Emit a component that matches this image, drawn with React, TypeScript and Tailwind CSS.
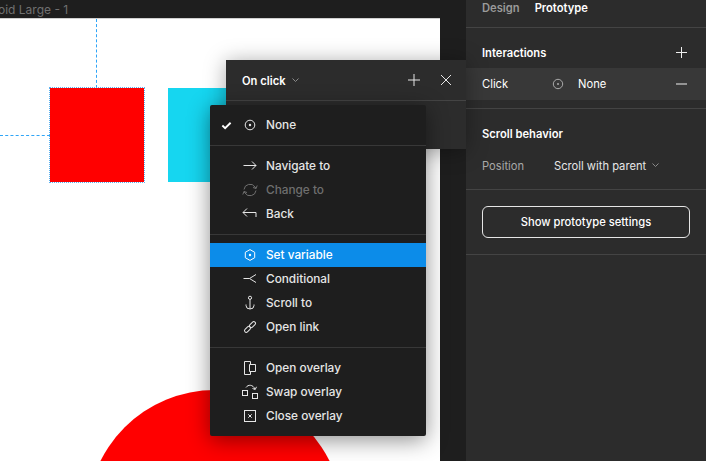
import React from "react";

const font = "font-['Inter','Liberation_Sans',sans-serif]";

function Icon({ children, dim }: { children: React.ReactNode; dim?: boolean }) {
  return (
    <svg
      width="16"
      height="16"
      viewBox="0 0 16 16"
      fill="none"
      stroke="currentColor"
      strokeWidth="1"
      className={dim ? "text-[#6f6f6f]" : "text-[#e6e6e6]"}
    >
      {children}
    </svg>
  );
}

function TargetIcon({ hex }: { hex?: boolean }) {
  return (
    <>
      {hex ? <path d="M8 2.6 12.7 5.3V10.7L8 13.4 3.3 10.7V5.3Z" /> : <circle cx="8" cy="8" r="4.8" />}
      <circle cx="8" cy="8" r="1.2" fill="currentColor" stroke="none" />
    </>
  );
}

type Item = { label: string; icon: React.ReactNode; dim?: boolean; active?: boolean; check?: boolean };

const sections: Item[][] = [
  [{ label: "None", check: true, icon: <TargetIcon /> }],
  [
    { label: "Navigate to", icon: <path d="M1.5 7.5H14M10 3.5l4 4-4 4" /> },
    {
      label: "Change to",
      dim: true,
      icon: (
        <>
          <path d="M2 7.5A6 6 0 0 1 13 5L14 6.5M15.2 3.5 14 6.5 11 5.5" />
          <path d="M14 8.5A6 6 0 0 1 3 11L2 9.5M0.8 12.5 2 9.5 5 10.5" />
        </>
      ),
    },
    { label: "Back", icon: <path d="M14 11V6.5H1M5 2.5l-4 4 4 4" /> },
  ],
  [
    { label: "Set variable", active: true, icon: <TargetIcon hex /> },
    { label: "Conditional", icon: <path d="M1.5 7.5H7.5L14 3.5M7.5 7.5 14 11.5" /> },
    {
      label: "Scroll to",
      icon: (
        <>
          <circle cx="8" cy="2.8" r="1.6" />
          <path d="M8 4.4V14M4 9.5V10.5a4 3.5 0 0 0 8 0V9.5" />
        </>
      ),
    },
    {
      label: "Open link",
      icon: (
        <>
          <rect x="7" y="3.9" width="7" height="3.4" rx="1.7" transform="rotate(-45 10.5 5.6)" />
          <rect x="2" y="8.7" width="7" height="3.4" rx="1.7" transform="rotate(-45 5.5 10.4)" />
        </>
      ),
    },
  ],
  [
    {
      label: "Open overlay",
      icon: (
        <>
          <path d="M8.5 4.5V1.5H2.5V14.5H8.5V11.5" />
          <path d="M7.5 4.5H13.5V11.5H7.5Z" />
        </>
      ),
    },
    {
      label: "Swap overlay",
      icon: (
        <>
          <rect x="0.5" y="6.5" width="5" height="5" />
          <rect x="10.5" y="9.5" width="5" height="5" />
          <path d="M4 3.5C6 0.3 11 0.3 13 5.2M14.5 2.8 13.2 5.5 10.5 4.5" />
        </>
      ),
    },
    {
      label: "Close overlay",
      icon: (
        <>
          <rect x="2.5" y="2.5" width="11" height="11" />
          <path d="M6.3 6.3 9.7 9.7M9.7 6.3 6.3 9.7" />
        </>
      ),
    },
  ],
];

function Menu() {
  return (
    <div className="absolute left-[210px] top-[105px] w-[216px] rounded-[2px] bg-[#1e1e1e] shadow-[0_4px_22px_rgba(0,0,0,0.45)]">
      {sections.map((items, i) => (
        <div key={i} className={i > 0 ? "border-t border-[#383838] py-2" : "py-2"}>
          {items.map((it) => (
            <div key={it.label} className={`flex h-6 items-center ${it.active ? "bg-[#0c8ce9]" : ""}`}>
              <span className="flex w-[24px] justify-end text-white">
                {it.check && (
                  <svg width="11" height="11" viewBox="0 0 12 12" className="mr-[2px]" fill="none" stroke="currentColor" strokeWidth="2">
                    <path d="M1.5 6 4.5 9 10.5 3" />
                  </svg>
                )}
              </span>
              <span className="flex w-[32px] justify-center">
                {it.active ? (
                  <span className="flex [&_svg]:text-white">
                    <Icon>{it.icon}</Icon>
                  </span>
                ) : (
                  <Icon dim={it.dim}>{it.icon}</Icon>
                )}
              </span>
              <span
                className={`pt-[2px] text-[11.8px] font-medium ${
                  it.dim ? "text-[#6f6f6f]" : it.active ? "text-white" : "text-[#e6e6e6]"
                }`}
              >
                {it.label}
              </span>
            </div>
          ))}
        </div>
      ))}
    </div>
  );
}

function Chevron() {
  return (
    <svg width="7" height="4" viewBox="0 0 7 4" fill="none" stroke="#8a8a8a" strokeWidth="1">
      <path d="M.5 .5 3.5 3.5 6.5 .5" />
    </svg>
  );
}

function Popover() {
  return (
    <div className="absolute left-[226px] top-[60px] h-[89px] w-[240px] bg-[#2c2c2c] shadow-[0_2px_20px_rgba(0,0,0,0.35)]">
      <div className="flex h-[41px] items-center justify-between border-b border-[#444] pl-4 pr-[12px]">
        <div className="flex items-center gap-[6px]">
          <span className="pt-[2px] text-[11.2px] font-semibold text-white">On click</span>
          <Chevron />
        </div>
        <div className="flex items-center gap-[16px] text-[#e6e6e6]">
          <svg width="16" height="16" viewBox="0 0 16 16" fill="none" stroke="currentColor">
            <path d="M8 2V14M2 8H14" />
          </svg>
          <svg width="16" height="16" viewBox="0 0 16 16" fill="none" stroke="currentColor">
            <path d="M3 3 13 13M13 3 3 13" />
          </svg>
        </div>
      </div>
    </div>
  );
}

function Canvas() {
  return (
    <div className="flex w-[466px] shrink-0 flex-col bg-[#1e1e1e]">
      <div className="h-[18px] shrink-0 overflow-hidden">
        <div className="ml-[-15px] text-[12px] leading-[20px] text-[#707070]">Droid Large - 1</div>
      </div>
      <div className="relative h-[443px] w-[440px] overflow-hidden border-t border-[#d0d0d0] bg-white">
        <div className="absolute left-[96px] top-0 h-[69px] border-l border-dashed border-[#2fa5f7]" />
        <div className="absolute left-0 top-[116px] w-[50px] border-t border-dashed border-[#2fa5f7]" />
        <div className="absolute left-[50px] top-[69px] h-[94px] w-[94px] bg-[#ff0000] outline outline-1 outline-dotted outline-[#5cb2f0]" />
        <div className="absolute left-[168px] top-[69px] h-[94px] w-[94px] bg-[#16d6f0]" />
        <div className="absolute left-[87px] top-[371px] h-[256px] w-[256px] rounded-full bg-[#ff0000]" />
      </div>
    </div>
  );
}

function Sidebar() {
  return (
    <div className="flex w-[240px] shrink-0 flex-col bg-[#2c2c2c] text-[11.2px]">
      <div className="flex h-[28px] items-start gap-[15px] border-b border-[#444] pl-4 font-semibold leading-[17px]">
        <span className="text-[#9a9a9a]">Design</span>
        <span className="text-white">Prototype</span>
      </div>
      <div className="h-[81px] border-b border-[#444]">
        <div className="flex h-[40px] items-center justify-between pl-4 pr-[19px] pt-[8px]">
          <span className="pt-[2px] font-semibold text-white">Interactions</span>
          <svg width="11" height="11" viewBox="0 0 11 11" fill="none" stroke="#f0f0f0">
            <path d="M5.5 0V11M0 5.5H11" />
          </svg>
        </div>
        <div className="flex h-[32px] items-center bg-[#383838] pl-4 pr-[19px] text-white">
          <span className="w-[70px]">Click</span>
          <span className="flex w-[26px] text-[#aaa]">
            <svg width="12" height="12" viewBox="0 0 12 12" fill="none" stroke="currentColor">
              <circle cx="6" cy="6" r="4.7" />
              <circle cx="6" cy="6" r="1" fill="currentColor" stroke="none" />
            </svg>
          </span>
          <span>None</span>
          <svg className="ml-auto" width="11" height="2" viewBox="0 0 11 2" stroke="#f0f0f0">
            <path d="M0 1H11" />
          </svg>
        </div>
      </div>
      <div className="h-[81px] border-b border-[#444] pl-4">
        <div className="flex h-[48px] items-center pt-[3px] font-semibold text-white">Scroll behavior</div>
        <div className="flex h-[16px] items-center">
          <span className="w-[72px] pt-[2px] text-[#a8a8a8]">Position</span>
          <span className="pt-[2px] text-[#e6e6e6]">Scroll with parent</span>
          <span className="ml-[6px] flex">
            <Chevron />
          </span>
        </div>
      </div>
      <div className="border-b border-[#444] px-4 py-4">
        <div className="flex h-[32px] items-center justify-center rounded-[6px] border border-[#e6e6e6] font-medium text-white">
          Show prototype settings
        </div>
      </div>
    </div>
  );
}

export default function App() {
  return (
    <div className={`relative flex h-[461px] w-[706px] overflow-hidden bg-[#1e1e1e] ${font}`}>
      <Canvas />
      <Sidebar />
      <Popover />
      <Menu />
    </div>
  );
}
